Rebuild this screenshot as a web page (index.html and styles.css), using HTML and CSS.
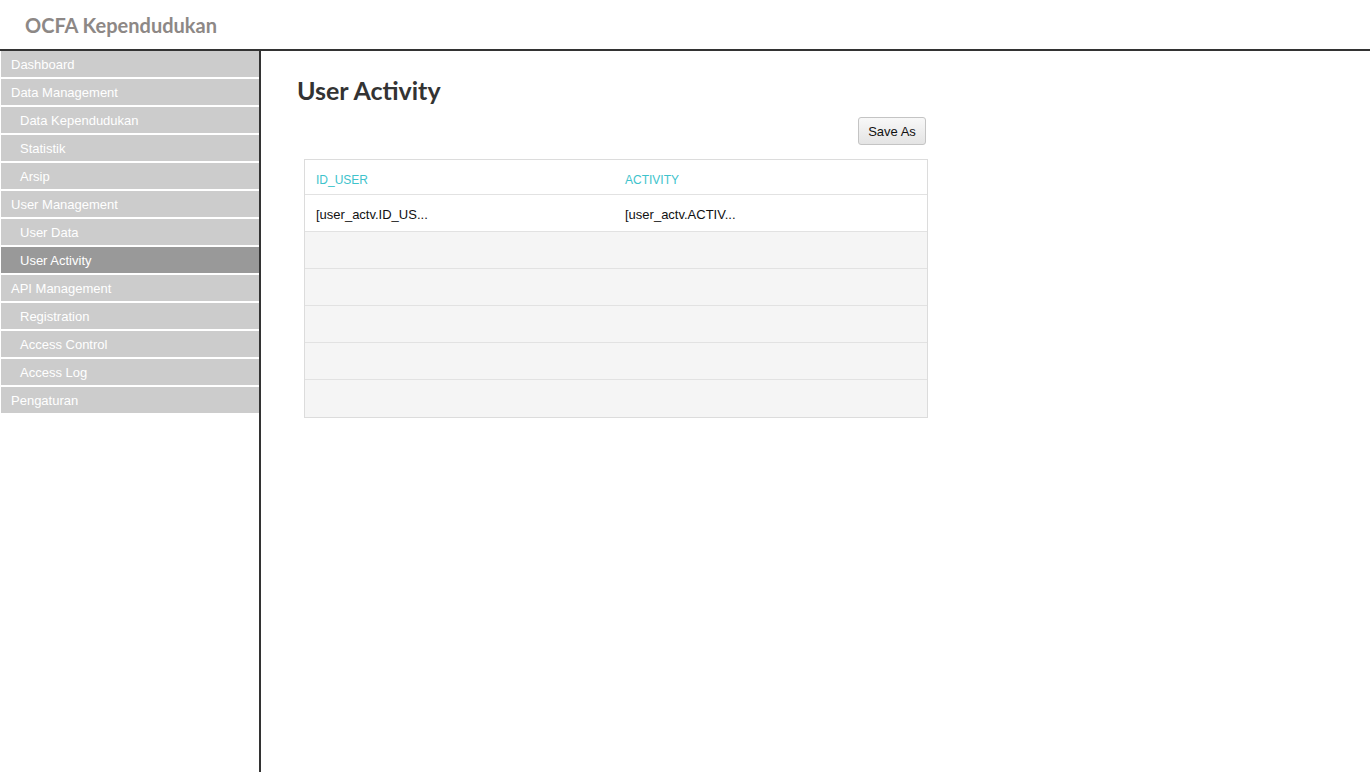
FILE: index.html
```html
<!DOCTYPE html>
<html>
<head>
<meta charset="utf-8">
<title>OCFA Kependudukan</title>
<link rel="stylesheet" href="styles.css">
</head>
<body>
<header class="topbar">
  <div class="brand">OCFA Kependudukan</div>
</header>
<div class="layout">
  <nav class="sidebar">
    <a class="nav-item">Dashboard</a>
    <a class="nav-item">Data Management</a>
    <a class="nav-item sub">Data Kependudukan</a>
    <a class="nav-item sub">Statistik</a>
    <a class="nav-item sub">Arsip</a>
    <a class="nav-item">User Management</a>
    <a class="nav-item sub">User Data</a>
    <a class="nav-item sub active">User Activity</a>
    <a class="nav-item">API Management</a>
    <a class="nav-item sub">Registration</a>
    <a class="nav-item sub">Access Control</a>
    <a class="nav-item sub">Access Log</a>
    <a class="nav-item">Pengaturan</a>
  </nav>
  <main class="content">
    <h1 class="page-title">User Activity</h1>
    <div class="toolbar">
      <button class="btn">Save As</button>
    </div>
    <div class="grid">
      <div class="grid-row head">
        <div class="cell c1">ID_USER</div>
        <div class="cell c2">ACTIVITY</div>
      </div>
      <div class="grid-row data">
        <div class="cell c1">[user_actv.ID_US...</div>
        <div class="cell c2">[user_actv.ACTIV...</div>
      </div>
      <div class="grid-row empty"></div>
      <div class="grid-row empty"></div>
      <div class="grid-row empty"></div>
      <div class="grid-row empty"></div>
      <div class="grid-row empty last"></div>
    </div>
  </main>
</div>
</body>
</html>
```
FILE: styles.css
```css
* { box-sizing: border-box; }
html, body { margin: 0; padding: 0; background: #fff; }
body { font-family: "Liberation Sans", Arial, sans-serif; height: 772px; overflow: hidden; }

.topbar {
  height: 51px;
  border-bottom: 2px solid #333;
  display: flex;
  align-items: center;
  padding-left: 25px;
}
.brand {
  font-family: "Lato", sans-serif;
  font-weight: bold;
  font-size: 20px;
  color: #8d8886;
  margin-top: 1px;
}

.layout { display: flex; height: 721px; }

.sidebar {
  width: 261px;
  border-right: 2px solid #333;
  display: flex;
  flex-direction: column;
}
.nav-item {
  display: flex;
  align-items: center;
  height: 28px;
  background: #cccccc;
  border-bottom: 2px solid #fff;
  border-left: 1px solid #fff;
  color: #fff;
  font-size: 13px;
  padding-left: 10px;
}
.nav-item.sub { padding-left: 19px; }
.nav-item.active { background: #999999; }

.content { flex: 1; padding: 24px 0 0 36px; }
.page-title {
  margin: 0;
  font-family: "Lato", sans-serif;
  font-weight: bold;
  font-size: 25px;
  color: #333;
  line-height: 30px;
}
.toolbar { width: 630px; display: flex; justify-content: flex-end; margin-top: 12px; }
.btn {
  height: 28px;
  width: 68px;
  padding: 0;
  font-family: "Liberation Sans", Arial, sans-serif;
  font-size: 13px;
  color: #111;
  background: linear-gradient(#f8f8f8, #e4e4e4);
  border: 1px solid #c4c4c4;
  border-radius: 3px;
  margin-right: 1px;
}

.grid {
  margin-top: 14px;
  margin-left: 7px;
  width: 624px;
  border: 1px solid #dcdcdc;
}
.grid-row { display: flex; height: 37px; border-bottom: 1px solid #e2e2e2; }
.grid-row.head { height: 35px; }
.grid-row.empty { background: #f5f5f5; }
.grid-row.last { border-bottom: none; height: 37px; }
.cell { display: flex; align-items: center; padding-left: 11px; font-size: 13px; color: #111; }
.data .cell { padding-top: 3px; }
.c1 { width: 309px; }
.c2 { flex: 1; }
.head .cell { font-size: 12px; color: #3ec3cc; padding-top: 5px; }
```
